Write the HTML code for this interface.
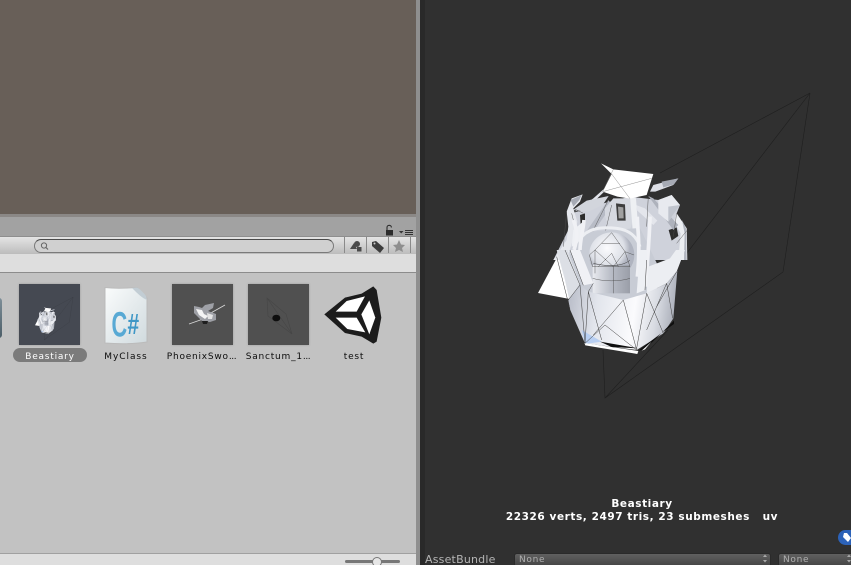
<!DOCTYPE html>
<html><head><meta charset="utf-8"><style>
html,body{margin:0;padding:0;background:#303030}
#r{position:relative;width:851px;height:565px;overflow:hidden;font-family:"DejaVu Sans","Liberation Sans",sans-serif}
#r div{position:absolute}
.l{font-size:9px;letter-spacing:.78px;color:#0c0c0c;text-align:center;white-space:nowrap;top:351px;line-height:12px}
.l span{letter-spacing:-.4px}
.th{top:284px;width:61px;height:61px;background:#505050;box-shadow:0 0 2px #999}
</style></head><body><div id="r">
<div style="left:0;top:0;width:416px;height:214px;background:#685f58"></div>
<div style="left:0;top:214px;width:416px;height:3px;background:#8b8886"></div>
<div style="left:0;top:217px;width:416px;height:19px;background:#a2a2a2"></div>
<div style="left:0;top:236px;width:416px;height:18px;background:linear-gradient(#e4e4e4,#bcbcbc);border-top:1px solid #8e8e8e;box-sizing:border-box"></div>
<div style="left:0;top:254px;width:416px;height:18px;background:#dedede"></div>
<div style="left:0;top:272px;width:416px;height:1px;background:#8c8c8c"></div>
<div style="left:0;top:273px;width:416px;height:280px;background:#c2c2c2"></div>
<div style="left:0;top:553px;width:416px;height:1px;background:#a0a0a0"></div>
<div style="left:0;top:554px;width:416px;height:11px;background:#dedede"></div>
<div style="left:416px;top:0;width:4px;height:565px;background:#8f8f8f"></div>
<div style="left:420px;top:0;width:5px;height:565px;background:#292929"></div>
<div style="left:425px;top:0;width:426px;height:565px;background:#303030"></div>

<!-- search -->
<div style="left:34px;top:239px;width:300px;height:14px;box-sizing:border-box;border:1px solid #7a7a7a;border-top-color:#4a4a4a;border-radius:7px;background:#d0d0d0"></div>
<svg style="position:absolute;left:0;top:210px" width="420" height="50">
<circle cx="44" cy="35.500" r="2.600" fill="none" stroke="#666"/><line x1="46" y1="37.500" x2="48" y2="39.500" stroke="#666" stroke-width="1.200"/>
<line x1="344.500" y1="27" x2="344.500" y2="43" stroke="#8a8a8a"/><line x1="366.500" y1="27" x2="366.500" y2="43" stroke="#8a8a8a"/><line x1="388.500" y1="27" x2="388.500" y2="43" stroke="#8a8a8a"/><line x1="410.500" y1="27" x2="410.500" y2="43" stroke="#8a8a8a"/>
<polygon points="350,39 354,33 357,39" fill="#4a4a4a"/><circle cx="357" cy="34" r="3" fill="#4a4a4a"/><rect x="357" y="37" width="4.500" height="4.500" fill="#4a4a4a"/>
<polygon points="372,32 376,31 384,38 380,43 372,36" fill="#3c3c3c"/><circle cx="374.500" cy="33.500" r="1" fill="#ccc"/>
<polygon points="399,30 401,34.500 405,35 402,38 403,42 399,40 395,42 396,38 393,35 397,34.500" fill="#8e8e8e"/>
<rect x="386" y="20" width="7" height="5.500" fill="#2c2c2c"/><path d="M387 20v-2.500a2.200 2.200 0 0 1 4.400 0" fill="none" stroke="#2c2c2c" stroke-width="1.100"/>
<polygon points="399,21 403.500,21 401.200,23.500" fill="#333"/>
<path d="M405 20.500h8M405 22.500h8M405 24.500h8" stroke="#333" stroke-width="1"/>
</svg>

<!-- left partial item -->
<div style="left:-8px;top:298px;width:10px;height:40px;border-radius:3px;background:linear-gradient(#7d8e98,#4c5e68)"></div>

<!-- Beastiary -->
<div class="th" style="left:19px;background:#454952"></div>
<svg style="position:absolute;left:19px;top:284px;filter:blur(.3px)" width="61" height="61"><use href="#model" transform="translate(16,23) scale(.14) translate(-538,-163)"/></svg>
<div style="left:13px;top:348px;width:74px;height:14px;border-radius:7px;background:#7b7b7b"></div>
<div class="l" style="left:13px;width:74px;color:#fff">Beastiary</div>

<!-- MyClass -->
<svg style="position:absolute;left:100px;top:284px" width="52" height="64">
<defs><linearGradient id="g" x1="0" y1="0" x2="1" y2="1"><stop offset="0" stop-color="#fafcfc"/><stop offset="1" stop-color="#d0dade"/></linearGradient></defs>
<path d="M5 3.500C18 5 28 4 37 3.500C41 7 44 10 47 14V58C34 60 18 60 5 59Z" fill="url(#g)" stroke="#bbb"/>
<path d="M32 4C38 10 42 14 47 16L46 12C43 8 40 5 37 3.500Z" fill="#c2cdd4"/>
<text transform="translate(11.500,52.500) scale(.62,1)" font-family="Liberation Sans" font-weight="bold" font-size="35" fill="#58a9d4">C</text>
<text transform="translate(27.500,50) scale(.72,1)" font-family="Liberation Sans" font-weight="bold" font-size="29" fill="#3f97c6">#</text>
</svg>
<div class="l" style="left:90px;width:72px;letter-spacing:.95px">MyClass</div>

<!-- Phoenix -->
<div class="th" style="left:171.500px"></div>
<svg style="position:absolute;left:171.500px;top:284px;filter:blur(.3px)" width="61" height="61">
<path d="M17 40L34 34M37 30L53 21" stroke="#d8d8d8" stroke-width=".9" fill="none"/>
<polygon points="22,22 27,23 30,24 33,21 42,19 41,24 36,27 44,30 44,36 38,38 30,37 26,33 22,29" fill="#9ea0a6"/>
<polygon points="24,25 30,26 32,30 36,32 33,35 27,31" fill="#f4f4f4"/>
<polygon points="35,29 41,31 40,35 36,35" fill="#e4e4e4"/>
<polygon points="30,37 36,37 35,40 31,40" fill="#1e1e1e"/>
</svg>
<div class="l" style="left:163px;width:77px">PhoenixSwo<span>...</span></div>

<!-- Sanctum -->
<div class="th" style="left:247.500px"></div>
<svg style="position:absolute;left:247.500px;top:284px" width="61" height="61">
<path d="M19 14L44 50 20 32ZM19 14L38 30 44 50" fill="none" stroke="#464646" stroke-width=".6"/>
<ellipse cx="28.300" cy="34" rx="4" ry="3.300" fill="#0e0e0e"/>
</svg>
<div class="l" style="left:240px;width:76px">Sanctum_1<span>...</span></div>

<!-- Unity -->
<svg style="position:absolute;left:0;top:0" width="416" height="420">
<defs><filter id="u"><feGaussianBlur stdDeviation=".35"/></filter></defs>
<g transform="translate(160,275) scale(.3333)" filter="url(#u)">
<polygon points="493,118 555,68 605,56 640,34 650,45 664,128 650,200 640,206 605,185 555,174" fill="#1b1b1b"/>
<polygon points="527,110 560,78 615,64 590,110" fill="#fff"/>
<polygon points="604,118 628,76 646,128 628,178" fill="#fff"/>
<polygon points="527,128 590,128 616,172 562,162" fill="#fff"/>
</g></svg>
<div class="l" style="left:324px;width:60px">test</div>

<!-- slider -->
<div style="left:345px;top:560px;width:55px;height:3px;border-radius:2px;background:#777"></div>
<div style="left:372px;top:557px;width:10px;height:10px;border-radius:5px;background:#e6e6e6;border:1px solid #777;box-sizing:border-box"></div>

<!-- 3D model -->
<svg style="position:absolute;left:425px;top:0" width="426" height="565" viewBox="425 0 426 565">
<defs>
<linearGradient id="b" x1="0" x2="1" y1="0" y2=".1"><stop offset="0" stop-color="#b4b8c4"/><stop offset=".3" stop-color="#e2e5ec"/><stop offset=".65" stop-color="#fbfbfd"/><stop offset=".85" stop-color="#d8dbe2"/><stop offset="1" stop-color="#b0b4be"/></linearGradient>
<linearGradient id="cyl" x1="0" x2="1" y1="0" y2="0"><stop offset="0" stop-color="#e8eaef"/><stop offset=".5" stop-color="#b8bcc6"/><stop offset="1" stop-color="#9a9ea8"/></linearGradient>
<radialGradient id="d" cx=".4" cy=".35"><stop offset="0" stop-color="#fbfbfd"/><stop offset=".75" stop-color="#dde0e7"/><stop offset="1" stop-color="#b0b4c0"/></radialGradient>
</defs>
<g id="model">
<path d="M810 93L660 173M810 93L783 272 605 398 603 350M810 93L680 262M605 398L668 330" fill="none" stroke="#1f1f1f" stroke-width=".6"/>
<polygon points="538,293 561,250 575,300" fill="#fff"/>
<g transform="translate(530,150) scale(.3333)">
<polygon points="125,190 220,160 300,140 385,150 425,135 450,165 440,190 470,235 470,330 70,330 115,240" fill="#cfd2db"/>
<polygon points="416,240 440,232 445,258 425,272" fill="#2c2c2c"/>
<polygon points="150,195 165,190 165,215 152,225" fill="#2c2c2c"/>
<polygon points="110,185 125,145 158,133 150,155 130,175 142,215 135,250 110,330 70,330 110,270 115,230" fill="#e6e8ed"/>
<polygon points="122,150 155,135 148,150 130,170" fill="#a6aab4"/>
<polygon points="130,240 165,210 160,250 142,285 125,290" fill="#eef0f4"/>
<polygon points="440,190 470,235 472,330 445,330 452,250 432,215" fill="#eceef2"/>
<polygon points="456,210 468,235 470,330 462,330 464,250" fill="#b0b4be"/>
<polygon points="135,185 190,145 235,105 226,122 178,168" fill="#e2e4ea"/>
<polygon points="128,180 170,152 236,138 218,165 175,185" fill="#d2d5dc"/>
<polygon points="165,250 235,150 246,165 182,258" fill="#b8bcc6"/>
<polygon points="360,125 370,105 445,85 430,105 376,125" fill="#dcdee5"/>
<polygon points="395,95 445,85 432,103 400,112" fill="#a6aab4"/>
<polygon points="318,165 345,175 382,212 370,225 322,182" fill="#e4e6ec"/>
<polygon points="355,138 370,145 445,225 430,240" fill="#aeb2bc"/>
<polygon points="385,150 425,135 450,165 415,215 385,190" fill="#e8eaef"/>
<polygon points="415,170 450,165 415,215" fill="#c0c4cd"/>
<polygon points="225,175 250,145 300,145 312,200 300,240 235,228 225,200" fill="#d6d9e0"/>
<polygon points="258,160 285,163 287,212 262,212" fill="#3d3d3d"/>
<polygon points="264,170 280,172 281,205 266,205" fill="#a0a0a0"/>
<polygon points="300,140 318,145 325,240 308,240" fill="#eef0f3"/>
<polygon points="213,40 250,58 370,72 350,135 300,146 262,140 218,125 245,72" fill="#fff"/>
<path d="M218 125L365 85M245 72L300 146M250 58L218 125" stroke="#777" stroke-width="1.200" fill="none"/>
<path d="M125 190L140 250M110 185L100 290M165 250L130 330M235 150L180 260M245 165L225 250M355 138L350 230M440 190L430 260M472 240L440 280M300 240L300 330M130 175L160 190" stroke="#4a4a4a" stroke-width="1.300" fill="none"/>
</g>
<polygon points="585,232 640,228 660,270 655,300 575,300 570,255" fill="#c8ccd5"/>
<g transform="translate(550,210) scale(.3333)">
<path d="M88 90C110 55 150 50 200 55C240 60 260 80 270 110" fill="none" stroke="#eceef2" stroke-width="9"/>
<path d="M70 30C80 55 85 80 72 120M102 30C100 60 90 90 90 120M262 20C262 60 272 100 262 200M300 20C300 60 292 150 288 230" fill="none" stroke="#f0f1f5" stroke-width="11"/>
<circle cx="185" cy="135" r="68" fill="url(#d)"/>
<rect x="128" y="165" width="112" height="85" fill="url(#cyl)"/>
<path d="M185 68L135 120 118 135M185 68L225 125 252 135M135 120L190 170 225 125M135 120V190M190 170V250M225 125L240 170M118 135L128 170H240M128 205C160 215 210 215 240 205M155 100L210 100M145 170L185 130 205 170" fill="none" stroke="#4a4a4a" stroke-width="1.300"/>
</g>
<g transform="translate(530,250) scale(.3333)">
<polygon points="355,50 420,25 438,0 465,0 440,65 410,100 350,130" fill="#eceef2"/>
<polygon points="80,0 112,0 150,100 118,150 105,90" fill="#dcdfe5"/>
<polygon points="120,0 150,0 190,100 160,106" fill="#f0f1f5"/>
<polygon points="330,0 352,0 346,120 320,130" fill="#eef0f4"/>
<polygon points="150,105 175,125 280,150 350,130 410,100 442,62 430,205 400,250 320,300 165,280 120,178 115,150" fill="url(#b)"/>
<polygon points="155,240 215,275 165,282" fill="#b8cff2"/>
<polygon points="163,279 325,303 322,312 166,286" fill="#fff"/>
<polygon points="210,275 325,295 245,291" fill="#0e0e0e"/>
<polygon points="325,302 400,245 432,222 432,212 345,298" fill="#0e0e0e"/>
<polygon points="335,302 365,275 345,298" fill="#fff"/>
<path d="M80 20L120 178M105 0L150 105L165 280M150 105L115 150M175 125L165 280M175 125L215 270M280 150L190 255M280 150L320 300M350 130L320 295M350 130L400 250M410 100L350 240M410 100L428 205M165 280L225 225L320 300M120 0L160 106M190 100L175 125M350 30L345 120M440 65L380 170M190 40C230 50 280 50 300 30" fill="none" stroke="#3a3a3a" stroke-width="1.500"/>
</g>
</g>
</svg>

<div style="left:422px;width:440px;top:497.500px;color:#fff;font-size:10.500px;font-weight:bold;text-align:center;line-height:13px;letter-spacing:.57px;white-space:nowrap">Beastiary<br>22326 verts, 2497 tris, 23 submeshes &nbsp; uv</div>
<div style="left:838px;top:530px;width:20px;height:15px;border-radius:8px;background:#2c62b8"></div>
<svg style="position:absolute;left:838px;top:530px" width="13" height="15"><polygon points="6,3 9,3 13,8 10,12 5,7" fill="#fff"/></svg>

<div style="left:425px;top:553px;color:#b4b4b4;font-size:11px;line-height:13px;letter-spacing:.2px">AssetBundle</div>
<div style="left:514px;top:553px;width:257px;height:14px;border-radius:3px;background:linear-gradient(#606060,#444);border:1px solid #2a2a2a;box-sizing:border-box;color:#b0b0b0;font-size:9px;line-height:12px;padding-left:4px;letter-spacing:.7px">None</div>
<div style="left:778px;top:553px;width:80px;height:14px;border-radius:3px;background:linear-gradient(#606060,#444);border:1px solid #2a2a2a;box-sizing:border-box;color:#b0b0b0;font-size:9px;line-height:12px;padding-left:4px;letter-spacing:.7px">None</div>
<svg style="position:absolute;left:760px;top:553px" width="91" height="12"><path d="M3 4l2-2.500 2 2.500zM3 7l2 2.500 2-2.500z" fill="#aaa"/><path d="M87 4l2-2.500 2 2.500zM87 7l2 2.500 2-2.500z" fill="#aaa"/></svg>
</div></body></html>
